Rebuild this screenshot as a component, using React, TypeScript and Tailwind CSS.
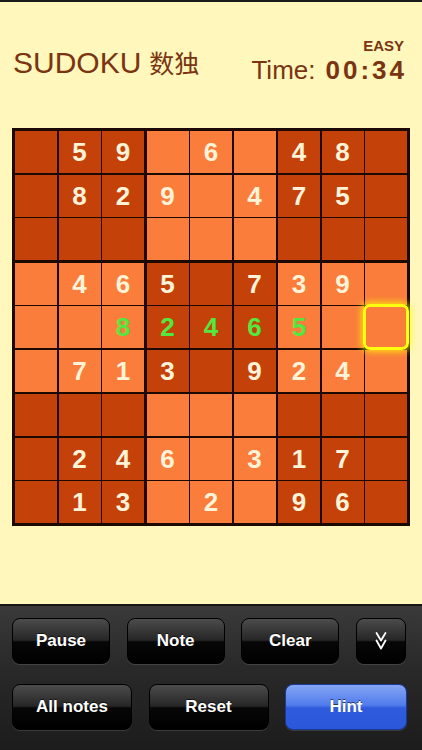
import React from "react";

const grid: string[] = [
  " 59 6 48 ",
  " 829 475 ",
  "         ",
  " 465 739 ",
  "  82465  ",
  " 713 924 ",
  "         ",
  " 246 317 ",
  " 13 2 96 ",
];

const SEL_R = 4;
const SEL_C = 8;

function Cell({ row, col, dark }: { row: number; col: number; dark: boolean }) {
  const ch = grid[row][col];
  const green = row === 4 && col >= 2 && col <= 6;
  return (
    <div
      className={`relative flex items-center justify-center ${dark ? "bg-[#c5410a]" : "bg-[#fa7d3c]"}`}
    >
      {ch !== " " && (
        <span
          className={`text-[26px] font-bold leading-none ${green ? "text-[#52e83f]" : "text-[#fff3d8]"}`}
          style={{ fontFamily: '"Liberation Sans", Arial, sans-serif' }}
        >
          {ch}
        </span>
      )}
      {row === SEL_R && col === SEL_C && (
        <div className="absolute -inset-[2px] z-10 rounded-[7px] border-[3px] border-[#ffff10] shadow-[0_0_6px_2px_rgba(255,255,0,0.7)]" />
      )}
    </div>
  );
}

function Box({ br, bc }: { br: number; bc: number }) {
  const dark = (br + bc) % 2 === 0;
  const cells = [];
  for (let r = 0; r < 3; r++) {
    for (let c = 0; c < 3; c++) {
      cells.push(<Cell key={`${r}-${c}`} row={br * 3 + r} col={bc * 3 + c} dark={dark} />);
    }
  }
  return <div className="grid grid-cols-3 grid-rows-3 gap-[1.5px]">{cells}</div>;
}

function GlossButton({
  children,
  className = "",
  blue = false,
}: {
  children: React.ReactNode;
  className?: string;
  blue?: boolean;
}) {
  return (
    <div
      className={`flex h-[46px] items-center justify-center rounded-[8px] border ${
        blue
          ? "border-[#1a3a9a] bg-[linear-gradient(180deg,#86a6f4_0%,#4f7bec_46%,#2f5cdf_52%,#2b57db_100%)]"
          : "border-black bg-[linear-gradient(180deg,#4c4c4c_0%,#262626_48%,#070707_52%,#000000_100%)]"
      } shadow-[0_1px_0_rgba(255,255,255,0.12)] ${className}`}
    >
      <span
        className="text-[17px] font-bold text-white [text-shadow:0_-1px_0_rgba(0,0,0,0.6)]"
        style={{ fontFamily: '"Liberation Sans", Arial, sans-serif' }}
      >
        {children}
      </span>
    </div>
  );
}

export default function App() {
  const boxes = [];
  for (let br = 0; br < 3; br++) {
    for (let bc = 0; bc < 3; bc++) {
      boxes.push(<Box key={`${br}-${bc}`} br={br} bc={bc} />);
    }
  }
  return (
    <div
      className="flex h-[750px] w-[422px] flex-col overflow-hidden bg-[#fff7bb]"
      style={{ fontFamily: '"Liberation Sans", Arial, sans-serif' }}
    >
      <div className="h-[2px] bg-[#1a1a1a]" />
      {/* header */}
      <div className="flex h-[126px] items-start justify-between pl-[13px] pr-[18px] text-[#7a3412]">
        <div className="mt-[45px] flex items-baseline">
          <span className="text-[30px] leading-[30px]">SUDOKU</span>
          <span
            className="ml-[8px] text-[25px] leading-[30px]"
            style={{ fontFamily: '"Noto Sans CJK SC", "Liberation Sans", sans-serif' }}
          >
            数独
          </span>
        </div>
        <div className="mt-[36px] flex flex-col items-end">
          <span className="text-[15px] font-bold leading-[15px]">EASY</span>
          <div className="mt-[4px] flex items-baseline">
            <span className="text-[26px] leading-[26px]">Time:</span>
            <span className="ml-[10px] mr-[-3px] text-[26px] font-bold leading-[26px] tracking-[3px]">
              00:34
            </span>
          </div>
        </div>
      </div>
      {/* grid */}
      <div className="pl-[12px]">
        <div className="h-[398px] w-[398px] bg-[#1c0a02] p-[3px]">
          <div className="grid h-full w-full grid-cols-3 grid-rows-3 gap-[2.5px]">{boxes}</div>
        </div>
      </div>
      <div className="flex-1" />
      {/* control panel */}
      <div className="h-[146px] border-t-2 border-[#161616] bg-[linear-gradient(180deg,#3a3a3a_0%,#2a2a2a_40%,#1c1c1c_100%)]">
        <div className="flex justify-between pl-[12px] pr-[16px] pt-[12px]">
          <GlossButton className="w-[98px]">Pause</GlossButton>
          <GlossButton className="w-[98px]">Note</GlossButton>
          <GlossButton className="w-[98px]">Clear</GlossButton>
          <div className="flex h-[46px] w-[50px] items-center justify-center rounded-[8px] border border-black bg-[linear-gradient(180deg,#4c4c4c_0%,#262626_48%,#070707_52%,#000000_100%)] shadow-[0_1px_0_rgba(255,255,255,0.12)]">
            <svg width="12" height="20" viewBox="0 0 12 20" fill="none" stroke="white" strokeWidth="1.8" strokeLinecap="round" strokeLinejoin="round">
              <path d="M1.5 2 L6 9.5 L10.5 2" />
              <path d="M1.5 9.5 L6 17.5 L10.5 9.5" />
            </svg>
          </div>
        </div>
        <div className="flex justify-between pl-[12px] pr-[15px] pt-[20px]">
          <GlossButton className="w-[120px]">All notes</GlossButton>
          <GlossButton className="w-[120px]">Reset</GlossButton>
          <GlossButton className="w-[122px]" blue>
            Hint
          </GlossButton>
        </div>
      </div>
    </div>
  );
}
